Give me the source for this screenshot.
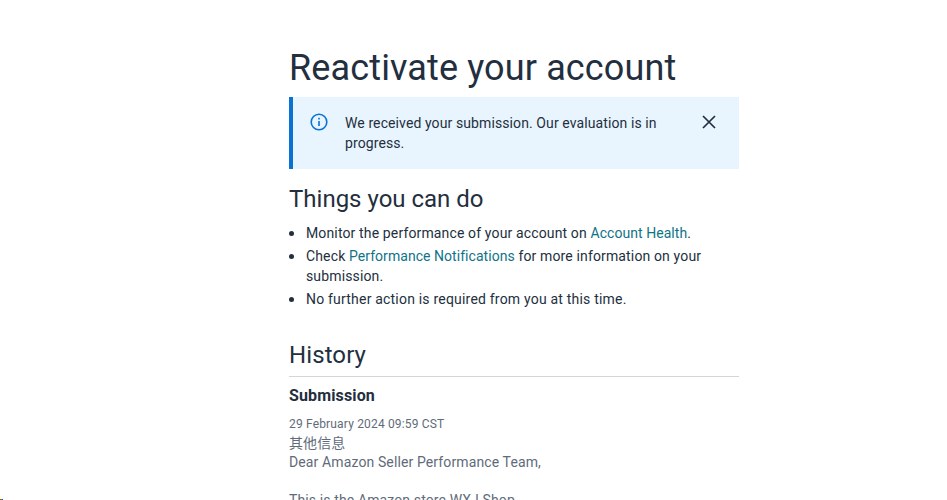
<main class="page">
  <h1>Reactivate your account</h1>
  <div class="alert">
    <svg class="info" viewBox="0 0 18 18" width="18" height="18" aria-hidden="true">
      <circle cx="9" cy="9" r="7.8" fill="none" stroke="#0972d3" stroke-width="1.6" />
      <rect x="8.2" y="8" width="1.6" height="5" fill="#0972d3" />
      <rect x="8.2" y="4.8" width="1.6" height="1.7" fill="#0972d3" />
    </svg>
    <p>We received your submission. Our evaluation is in progress.</p>
    <svg class="close" viewBox="0 0 14 14" width="14" height="14" aria-hidden="true">
      <path d="M1 1 L13 13 M13 1 L1 13" fill="none" stroke="#232f3e" stroke-width="1.7" />
    </svg>
  </div>
  <h2 class="things">Things you can do</h2>
  <ul>
    <li>Monitor the performance of your account on <a href="#a">Account Health</a>.</li>
    <li>Check <a href="#b">Performance Notifications</a> for more information on your submission.</li>
    <li class="last">No further action is required from you at this time.</li>
  </ul>
  <h2 class="history">History</h2>
  <h3>Submission</h3>
  <div class="date">29 February 2024 09:59 CST</div>
  <div class="body">其他信息<br />Dear Amazon Seller Performance Team,<br /><br />This is the Amazon store WXJ Shop</div>
</main>
<div class="dots"><i class="r"></i><i class="g"></i><i class="b"></i></div>

<style>
  :global(body) { margin: 0; background: #fff; overflow: hidden; height: 500px; }
  .page {
    width: 450px;
    margin-left: 289px;
    padding-top: 43px;
    font-family: Roboto, "Noto Sans CJK SC", sans-serif;
    color: #232f3e;
    letter-spacing: 0.14px;
  }
  h1 { margin: 0; font-size: 36px; line-height: 50px; font-weight: 400; letter-spacing: 0.13px; }
  .alert {
    margin-top: 4px;
    height: 72px;
    box-sizing: border-box;
    background: #e9f5fe;
    border-left: 4px solid #0972d3;
    display: flex;
    align-items: flex-start;
    padding: 16px 23px 0 17px;
  }
  .info { flex: none; }
  .alert p { margin: 0 0 0 17px; flex: 1; font-size: 14px; line-height: 20px; letter-spacing: 0.1px; }
  .close { margin: 2px 0 0 32px; flex: none; }
  h2 { margin: 0; font-weight: 400; font-size: 24px; line-height: 32px; letter-spacing: 0; }
  .things { margin-top: 14px; }
  ul { margin: 8px 0 0; padding: 0 0 0 17px; font-size: 14px; line-height: 20px; list-style: none; }
  li { margin-bottom: 3px; position: relative; }
  li::before {
    content: "";
    position: absolute;
    left: -17px;
    top: 7.5px;
    width: 5px;
    height: 5px;
    border-radius: 50%;
    background: #232f3e;
  }
  .last { letter-spacing: 0.2px; }
  a { color: #0f7387; text-decoration: none; letter-spacing: 0.05px; }
  .history { margin-top: 30px; padding-bottom: 5px; border-bottom: 1px solid #d5d5d5; letter-spacing: 0.1px; }
  h3 { margin: 8px 0 0; font-size: 16px; line-height: 22px; font-weight: 700; }
  .date { margin-top: 8px; font-size: 12px; line-height: 18px; color: #5f6b7a; letter-spacing: 0.17px; }
  .body { margin-top: 1px; font-size: 14px; line-height: 19px; color: #5f6b7a; letter-spacing: 0.12px; }
  .dots { position: fixed; left: 0; top: 499px; display: flex; }
  .dots i { width: 1px; height: 1px; display: block; }
  .r { background: #e33; } .g { background: #2a2; } .b { background: #23e; }
</style>
